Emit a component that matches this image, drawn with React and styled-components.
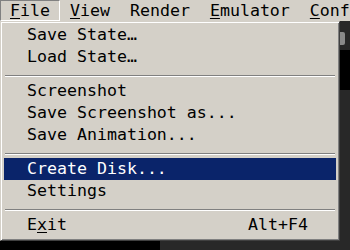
import React from 'react';
import styled, { createGlobalStyle } from 'styled-components';

const FACE = '#d4d0c8';
const SELECT = '#0a246a';

const GlobalStyle = createGlobalStyle`
  html, body {
    margin: 0;
    padding: 0;
    background: #282828;
  }
  body {
    font-family: "DejaVu Sans Mono", "Liberation Mono", monospace;
  }
`;

const Window = styled.div`
  width: 350px;
  height: 250px;
  display: flex;
  flex-direction: column;
  overflow: hidden;
  font-family: "DejaVu Sans Mono", "Liberation Mono", monospace;
  font-size: 16.6px;
  color: #000;
`;

const MenuBar = styled.div`
  height: 21px;
  flex: none;
  display: flex;
  background: ${FACE};
  white-space: nowrap;
`;

const BarItem = styled.div`
  box-sizing: border-box;
  height: 21px;
  line-height: 19px;
  padding: 0 9px;
  border: 1px solid ${p => (p.$open ? '#fff' : 'transparent')};
  border-top-color: ${p => (p.$open ? '#808080' : 'transparent')};
  border-left-color: ${p => (p.$open ? '#808080' : 'transparent')};
`;

const Key = styled.span`
  text-decoration: underline;
  text-underline-offset: 2px;
`;

const Workspace = styled.div`
  position: relative;
  flex: 1;
  display: flex;
  flex-direction: column;
  justify-content: space-between;
  background: #282828;
`;

const SideStrip = styled.div`
  align-self: flex-end;
  width: 10px;
  display: flex;
  flex-direction: column;
  padding-top: 11px;
  gap: 5px;
`;

const Thumb = styled.div`
  width: 5px;
  height: 13px;
  background: #8a8a8a;
  border-radius: 0 2px 2px 0;
`;

const ScreenEdge = styled.div`
  height: 40px;
  background: #000;
`;

const BottomStrip = styled.div`
  width: 160px;
  height: 10px;
  background: #000;
`;

const Dropdown = styled.div`
  position: absolute;
  left: 0;
  top: 0;
  width: 340px;
  box-sizing: border-box;
  background: ${FACE};
  border: 1px solid;
  border-color: ${FACE} #404040 #404040 ${FACE};
  box-shadow: inset 1px 1px 0 #fff, inset -1px -1px 0 #808080;
  padding: 2px 3px 4px 3px;
`;

const Row = styled.div`
  height: 22px;
  line-height: 22px;
  display: flex;
  justify-content: space-between;
  padding: 0 28px 0 23px;
  white-space: pre;
  background: ${p => (p.$active ? SELECT : 'transparent')};
  color: ${p => (p.$active ? '#fff' : '#000')};
`;

const Separator = styled.div`
  margin: 7px 1px 3px;
  height: 1px;
  background: #808080;
  border-bottom: 1px solid #fff;
`;

const items = [
  { label: 'Save State…' },
  { label: 'Load State…' },
  'sep',
  { label: 'Screenshot' },
  { label: 'Save Screenshot as...' },
  { label: 'Save Animation...' },
  'sep',
  { label: 'Create Disk...', active: true },
  { label: 'Settings' },
  'sep',
  { label: <>E<Key>x</Key>it</>, shortcut: 'Alt+F4' },
];

export default function App() {
  return (
    <Window>
      <GlobalStyle />
      <MenuBar>
        <BarItem $open><Key>F</Key>ile</BarItem>
        <BarItem><Key>V</Key>iew</BarItem>
        <BarItem>Render</BarItem>
        <BarItem><Key>E</Key>mulator</BarItem>
        <BarItem><Key>C</Key>onfig</BarItem>
      </MenuBar>
      <Workspace>
        <SideStrip>
          <Thumb />
          <ScreenEdge />
        </SideStrip>
        <BottomStrip />
        <Dropdown>
          {items.map((it, i) =>
            it === 'sep' ? (
              <Separator key={i} />
            ) : (
              <Row key={i} $active={it.active}>
                <span>{it.label}</span>
                {it.shortcut && <span>{it.shortcut}</span>}
              </Row>
            )
          )}
        </Dropdown>
      </Workspace>
    </Window>
  );
}
